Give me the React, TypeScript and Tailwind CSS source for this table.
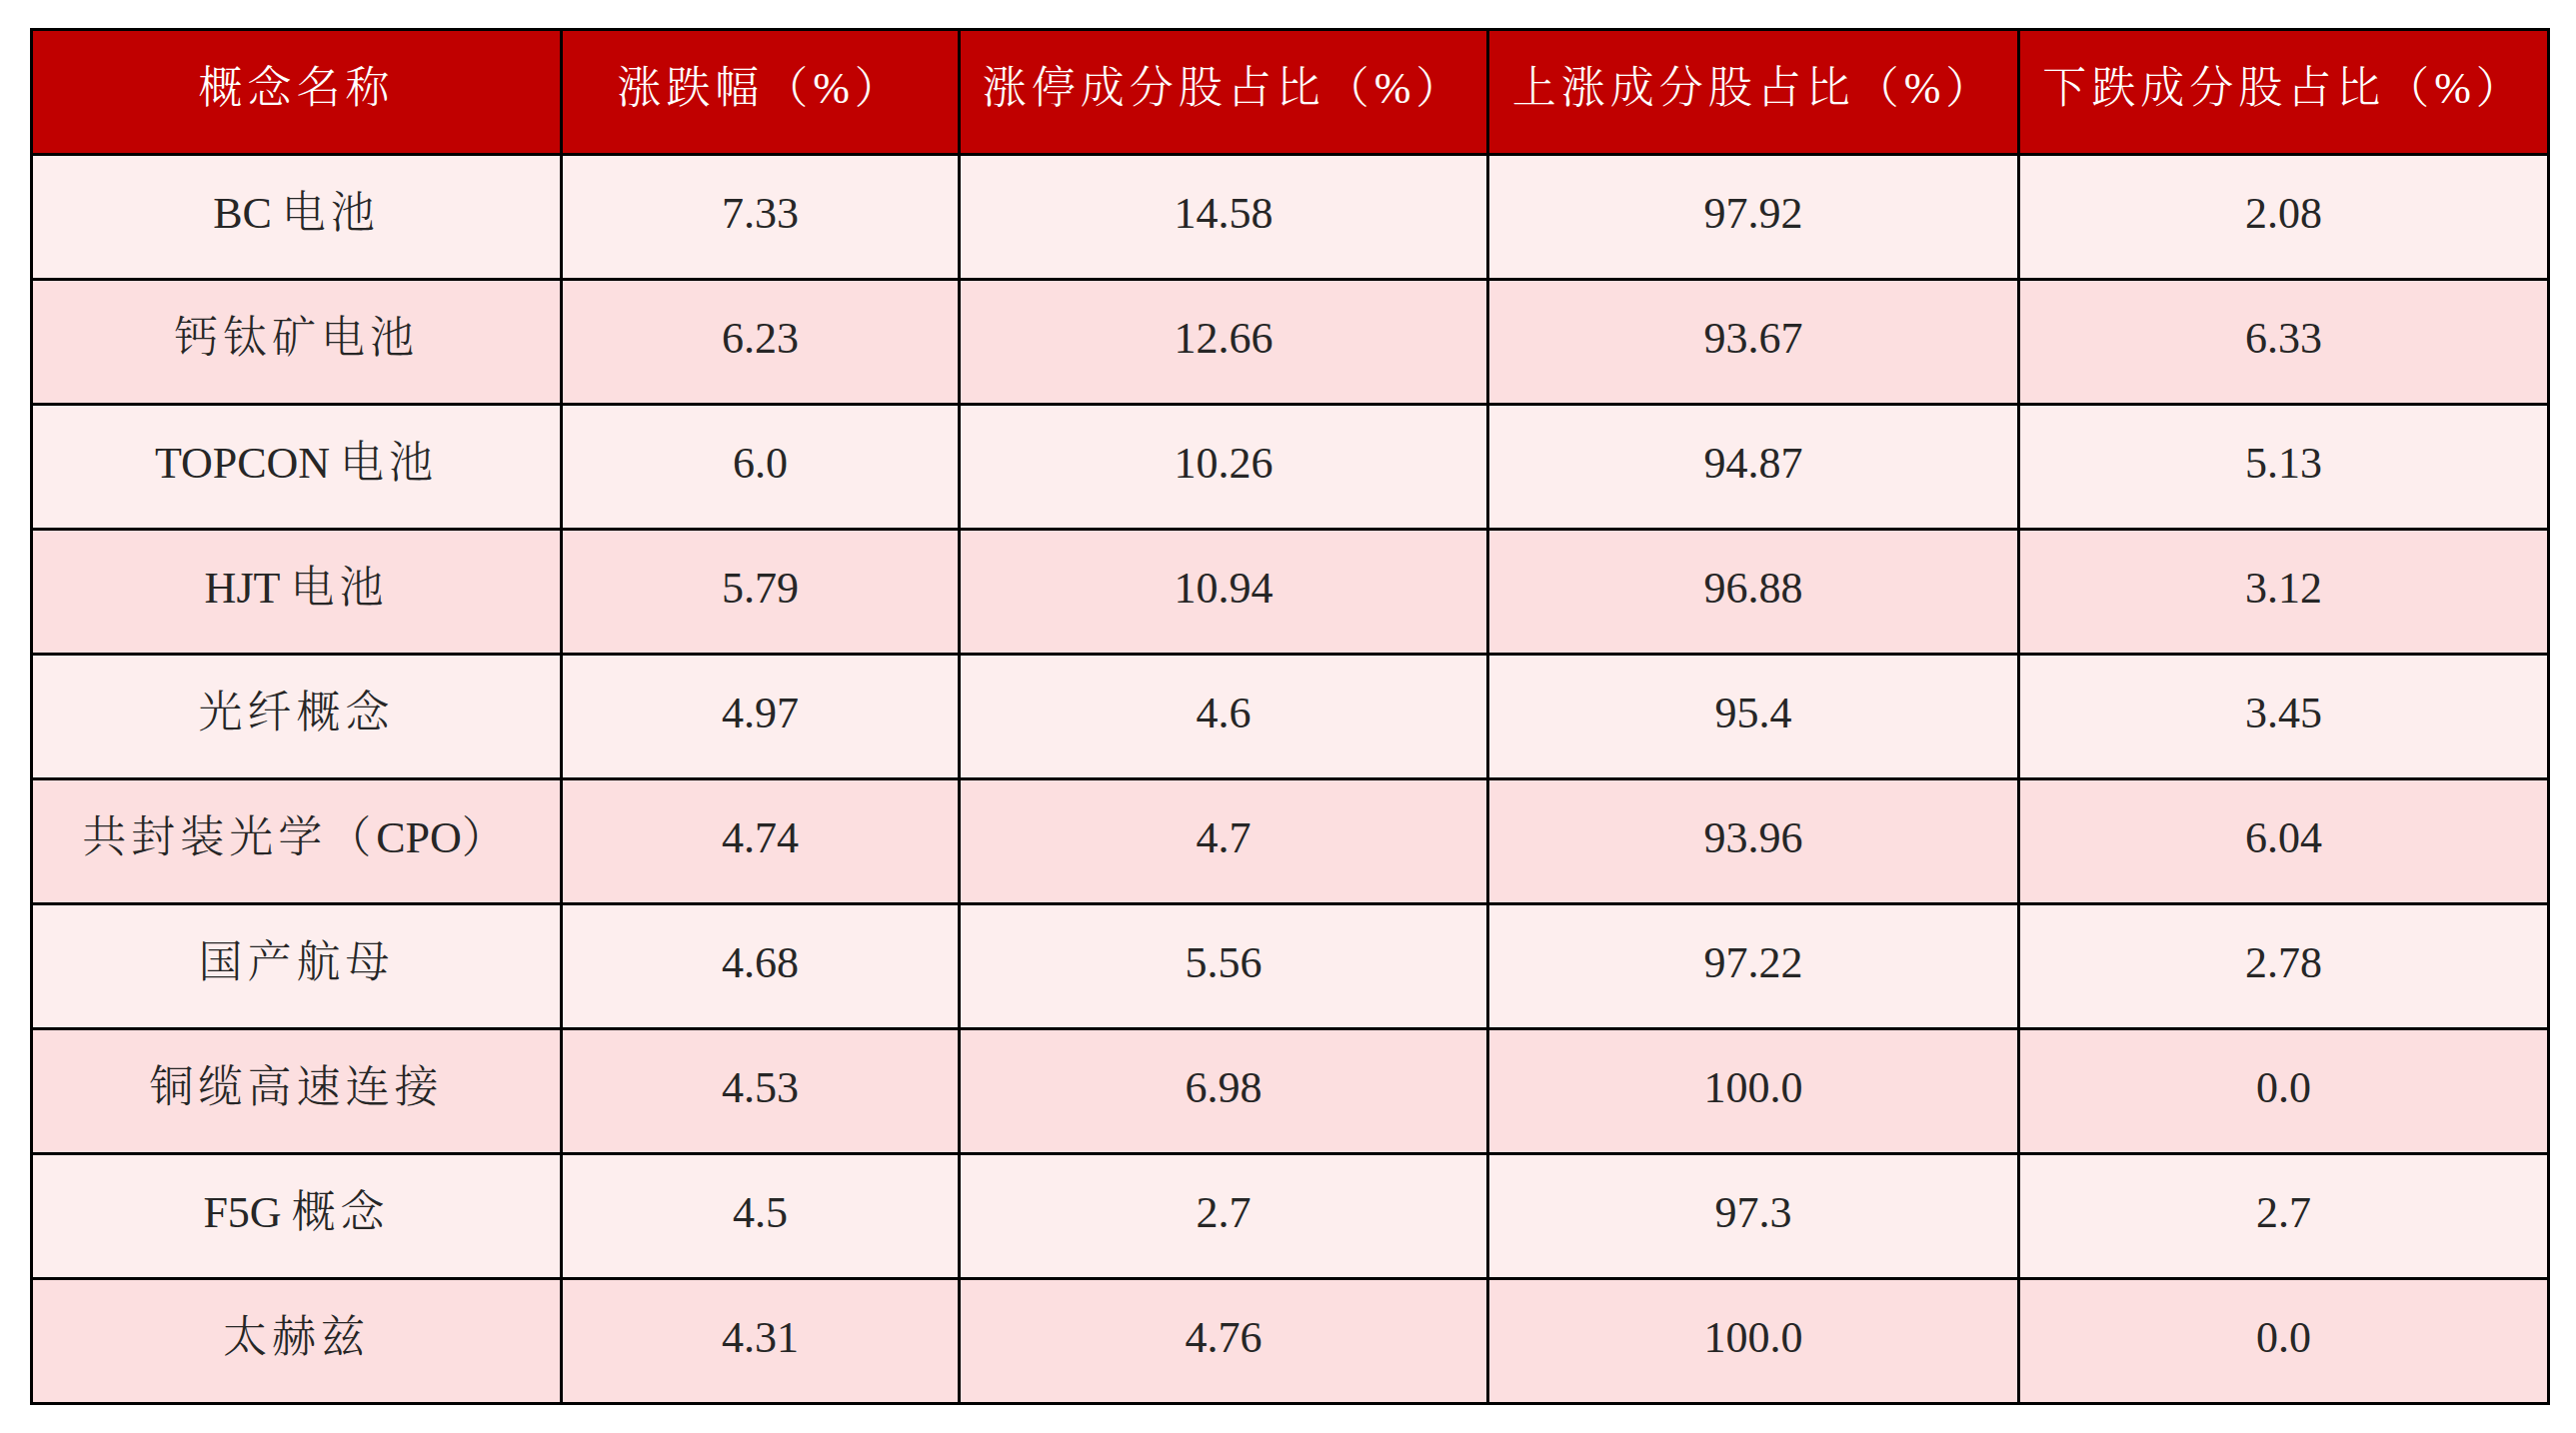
import React from "react";

const headers = [
  "概念名称",
  "涨跌幅（%）",
  "涨停成分股占比（%）",
  "上涨成分股占比（%）",
  "下跌成分股占比（%）",
];

const rows: [string, string, string, string, string][] = [
  ["BC电池", "7.33", "14.58", "97.92", "2.08"],
  ["钙钛矿电池", "6.23", "12.66", "93.67", "6.33"],
  ["TOPCON电池", "6.0", "10.26", "94.87", "5.13"],
  ["HJT电池", "5.79", "10.94", "96.88", "3.12"],
  ["光纤概念", "4.97", "4.6", "95.4", "3.45"],
  ["共封装光学（CPO）", "4.74", "4.7", "93.96", "6.04"],
  ["国产航母", "4.68", "5.56", "97.22", "2.78"],
  ["铜缆高速连接", "4.53", "6.98", "100.0", "0.0"],
  ["F5G概念", "4.5", "2.7", "97.3", "2.7"],
  ["太赫兹", "4.31", "4.76", "100.0", "0.0"],
];

// splits a label so CJK characters get spacing and latin letters stay tight
function Label({ text }: { text: string }) {
  const parts = text.match(/[A-Za-z0-9.%]+|[^A-Za-z0-9.%]+/g) ?? [];
  return (
    <>
      {parts.map((p, k) =>
        /[A-Za-z0-9]/.test(p) ? (
          <span
            key={k}
            className={`tracking-normal ${k < parts.length - 1 && !/^[（(]/.test(parts[k + 1]) && !/）/.test(parts[k + 1]) ? "mr-[10px]" : ""}`}
          >
            {p}
          </span>
        ) : (
          <span key={k} className="tracking-[5px]">
            {p}
          </span>
        )
      )}
    </>
  );
}

export default function App() {
  return (
    <div className="min-h-screen bg-white pt-[28px] pl-[30px]">
      <table className="w-[2518px] table-fixed border-collapse border-[3px] border-black font-[family-name:Liberation_Serif,Noto_Serif_CJK_SC,Noto_Sans_CJK_SC,serif] font-light">
        <colgroup>
          <col className="w-[530px]" />
          <col className="w-[398px]" />
          <col className="w-[529px]" />
          <col className="w-[531px]" />
          <col className="w-[530px]" />
        </colgroup>
        <thead>
          <tr className="h-[125px] bg-[#c00000]">
            {headers.map((h) => (
              <th
                key={h}
                className="border-[3px] border-black pb-[6px] text-center align-middle text-[44px] font-light text-white"
              >
                <Label text={h} />
              </th>
            ))}
          </tr>
        </thead>
        <tbody>
          {rows.map((r, i) => (
            <tr
              key={r[0]}
              className={`h-[125px] ${i % 2 === 0 ? "bg-[#fdeeee]" : "bg-[#fcdfe0]"}`}
            >
              {r.map((cell, j) => (
                <td
                  key={j}
                  className="border-[3px] border-black pb-[6px] text-center align-middle text-[44px] text-[#262626]"
                >
                  {j === 0 ? <Label text={cell} /> : cell}
                </td>
              ))}
            </tr>
          ))}
        </tbody>
      </table>
    </div>
  );
}
